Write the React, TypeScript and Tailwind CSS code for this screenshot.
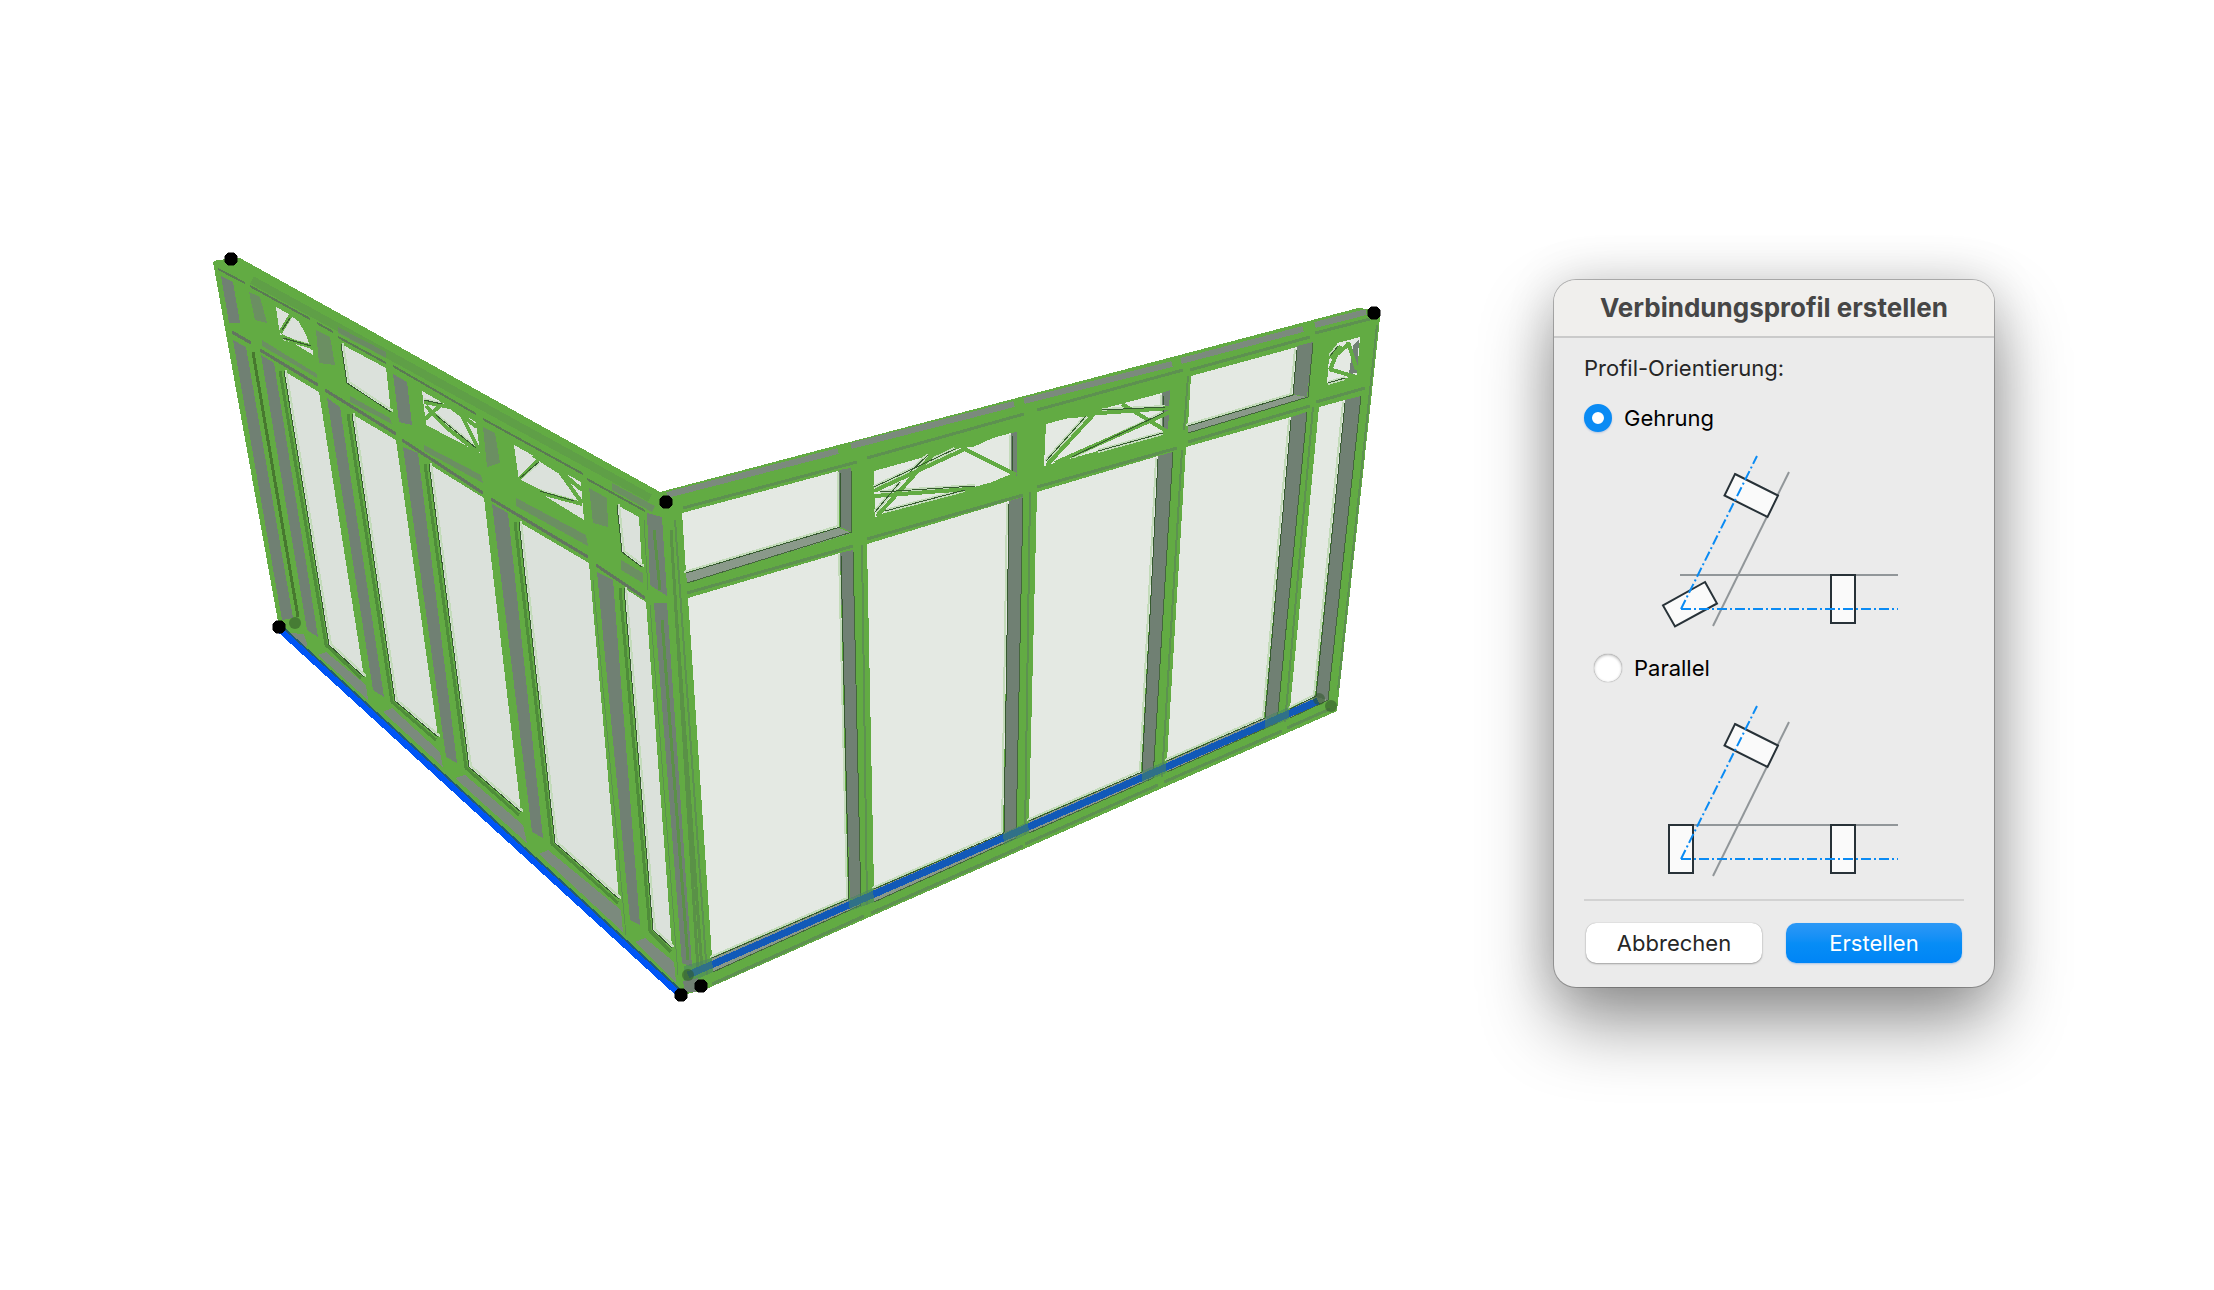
import { useState } from 'react';

const GREEN = '#62ab43';
const DEEP = '#4f8c3a';
const SHADE = '#5d9150';
const DARK = '#365a30';
const PALE = '#c3dbba';
const STEEL = '#708073';

type Quad = string;

const leftPanes: Quad[] = [
  '284,371 319,392 364,677 329,645',
  '352,414 396,440 438,737 395,701',
  '429,464 484,498 521,812 469,767',
  '519,522 589,563 619,899 555,843',
  '624,588 646,602 672,948 653,930',
  '276,307 313,327 313,355 280,335',
  '341,344 386,368 391,412 347,383',
  '422,391 476,422 480,453 426,425',
  '514,445 581,482 584,520 519,480',
  '617,505 639,517 642,567 622,552',
];

const leftPaneEdges: Quad[] = [
  '284,371 329,645 364,677',
  '352,414 395,701 438,737',
  '429,464 469,767 521,812',
  '519,522 555,843 619,899',
  '624,588 653,930 672,948',
  '341,344 347,383 391,412',
  '617,505 622,552 642,567',
];

const leftShadeLines: Quad[] = [
  '280,371 326,645 361,678',
  '348,414 392,702 436,740',
  '425,464 466,768 519,815',
  '515,522 552,844 618,903',
  '620,588 650,931 671,952',
];

const leftSteel: Quad[] = [
  '221,276 233,282 240,323 229,323',
  '233,340 246,347 293,618 282,620',
  '261,355 274,363 318,637 307,630',
  '327,398 340,407 384,697 373,690',
  '403,447 418,453 457,763 446,757',
  '492,504 508,513 543,838 532,832',
  '597,572 613,580 640,925 630,920',
  '393,374 407,382 412,425 399,422',
  '647,513 662,517 667,596 650,585',
  '654,603 667,603 692,967 682,963',
];

const leftSoftSteel: Quad[] = [
  '249,292 260,297 267,323 255,320',
  '316,330 330,337 335,365 319,363',
  '483,427 495,433 500,463 487,467',
  '589,488 607,498 608,527 593,523',
  '338,327 386,352 386,358 338,333',
  '262,340 317,374 317,378 262,346',
  '350,396 390,418 392,424 350,402',
  '424,445 481,475 483,483 424,451',
  '516,498 586,535 588,546 516,506',
  '612,483 655,506 652,512 612,490',
  '621,560 643,573 643,583 621,570',
];

const leftBottomRail: Quad[] = [
  '290,633 304,634 307,644 306,648',
  '318,655 326,652 366,685 368,700',
  '383,712 392,708 440,752 443,767',
  '455,778 465,775 523,825 527,843',
  '539,854 548,850 621,910 623,932',
  '635,942 645,938 674,962 676,982',
];

const rightPanes: Quad[] = [
  '682,513 838,471 839,527 686,572',
  '688,598 840,553 848,898 712,957',
  '874,471 1011,433 1011,477 875,517',
  '867,544 1009,501 1003,833 874,888',
  '1046,424 1162,393 1163,433 1044,466',
  '1037,492 1158,456 1141,772 1029,820',
  '1191,376 1297,347 1293,394 1188,425',
  '1186,447 1291,417 1264,718 1167,760',
  '1330,345 1360,337 1357,375 1327,383',
  '1319,407 1345,400 1315,696 1290,708',
];

const rightSteel: Quad[] = [
  '839,470 851,468 852,532 840,527',
  '840,553 853,550 861,903 850,898',
  '1011,433 1017,432 1017,476 1011,475',
  '1009,501 1023,497 1016,838 1004,833',
  '1162,393 1170,390 1168,432 1162,432',
  '1158,456 1173,452 1153,777 1142,772',
  '1297,346 1313,342 1307,397 1293,394',
  '1291,417 1307,412 1277,723 1265,718',
  '1353,345 1359,340 1357,373 1349,374',
  '1345,400 1361,396 1328,700 1316,697',
];

const rightPaneEdges: Quad[] = [
  '840,473 840,527 686,573',
  '841,555 849,899 712,958',
  '1012,436 1012,475',
  '1009,504 1004,833 874,889',
  '1163,396 1163,430',
  '1158,459 1142,772 1029,821',
  '1297,350 1293,395 1188,426',
  '1291,420 1265,718 1167,761',
  '1345,403 1316,696 1290,709',
];

const rightFarEdges: Quad[] = [
  '851,470 852,532 687,583',
  '853,551 861,905 713,972',
  '1023,498 1016,838 874,902',
  '1173,452 1153,778 1029,833',
  '1313,343 1308,397 1188,433',
  '1307,412 1277,723 1167,772',
  '1361,396 1328,700 1290,718',
];

const sills: Quad[] = [
  '712,958 849,899 861,905 713,972',
  '874,889 1004,833 1016,838 874,902',
  '1029,821 1142,772 1153,778 1029,833',
  '1167,761 1265,718 1277,723 1167,772',
  '1290,709 1316,697 1328,700 1290,718',
  '686,573 839,528 852,533 687,583',
  '1188,426 1293,395 1308,397 1188,433',
];

const topChannels: Quad[] = [
  '667,495 838,451',
  '851,446 1014,404',
  '1024,401 1172,364',
  '1181,361 1303,329',
  '1315,325 1366,312',
];

const rightShades: Quad[] = [
  '683,508 857,462',
  '867,458 1024,414',
  '1037,410 1183,370',
  '1190,370 1310,337',
  '1315,333 1370,319',
  '687,593 853,546',
  '867,539 1023,495',
  '1037,487 1177,448',
  '1188,442 1310,406',
  '1316,402 1365,388',
  '712,984 864,916',
  '871,913 1023,846',
  '1025,844 1158,785',
  '1164,782 1282,731',
  '1287,728 1330,709',
];

const rightPostShades: Quad[] = [
  '862,545 867,905',
  '1030,492 1025,835',
  '1182,450 1162,777',
  '1188,376 1184,430',
  '1313,407 1285,722',
  '1377,325 1338,690',
  '675,520 707,975',
];

const trussMembers: Quad[] = [
  '280,333 292,313',
  '289,312 300,320 308,334 313,350',
  '281,336 295,342 313,347',
  '424,402 455,408 462,416 480,452',
  '424,420 443,403',
  '426,406 447,428 478,452',
  '452,408 477,427',
  '518,480 539,459',
  '533,455 560,472 582,503',
  '519,481 545,494 582,504',
  '562,473 582,490',
  '874,491 965,449',
  '874,496 983,488 1014,475',
  '877,516 935,452',
  '965,449 1016,475',
  '1047,465 1094,414',
  '1070,416 1100,413 1170,408',
  '1055,463 1170,412',
  '1122,404 1168,432',
  '1330,370 1336,355 1350,343',
  '1329,369 1356,377',
  '1348,342 1357,370',
  '1330,358 1341,346',
];

const trussShadows: Quad[] = [
  '282,330 290,318',
  '283,338 311,346',
  '424,400 442,404',
  '436,415 476,448',
  '520,478 539,462',
  '540,491 574,501',
  '874,487 955,449',
  '880,492 975,486',
  '875,512 900,482',
  '910,472 928,455',
  '885,511 965,490',
  '1046,461 1086,416',
  '1102,410 1165,407',
  '1072,457 1163,413',
  '1098,451 1163,433',
  '1330,356 1338,346',
  '1328,383 1345,378',
];

const anchors = [
  [231, 259],
  [666, 502],
  [1374, 313],
  [279, 627],
  [681, 995],
  [701, 986],
];

const ghostAnchors = [
  [295, 623],
  [688, 975],
  [1319, 699],
  [1331, 706],
];

const polygons = (items: Quad[], fill: string, opacity = 1) =>
  items.map((points) => <polygon key={points} points={points} fill={fill} opacity={opacity} />);

const lines = (items: Quad[], stroke: string, width: number) =>
  items.map((points) => (
    <polyline key={points} points={points} fill="none" stroke={stroke} strokeWidth={width} />
  ));

function FacadeModel() {
  return (
    <svg
      viewBox="200 240 1200 770"
      className="mt-60 min-w-0 flex-1"
      shapeRendering="crispEdges"
      role="img"
      aria-label="Fassade"
    >
      <polygon
        points="213,262 217,260 240,258 660,492 1358,308 1378,310 1380,318 1337,711 704,990 683,995 279,627"
        fill={GREEN}
      />

      {/* left wing */}
      {lines(['252,280 650,498'], '#5f9f47', 8)}
      {polygons(leftSteel, STEEL)}
      {polygons(leftSoftSteel, STEEL, 0.65)}
      {polygons(leftBottomRail, '#7b8a7d')}
      {lines(['253,352 298,617'], '#47782f', 3)}
      {lines(leftShadeLines, DEEP, 3)}
      {polygons(leftPanes, '#dbe1db')}
      <g transform="translate(2 -1)">{lines(leftPaneEdges, PALE, 2)}</g>
      {lines(leftPaneEdges, DARK, 1)}
      {lines(
        ['218,269 245,283', '250,286 310,319', '317,323 333,332', '338,337 386,363', '393,366 476,414', '483,419 583,474', '587,479 645,511'],
        '#5a7a53',
        2,
      )}
      {lines(
        ['232,332 251,343', '260,350 318,385', '325,390 396,434', '402,440 483,493', '491,499 588,557', '596,565 645,598'],
        '#62755f',
        3,
      )}
      {lines(['593,580 626,935', '644,520 648,590', '650,605 678,975'], SHADE, 1)}
      {lines(['654,530 660,590', '662,620 688,960', '671,530 698,970', '676,610 702,970'], '#5a9147', 3)}

      {/* right wing */}
      {polygons(rightPanes, '#e4e9e3')}
      <g transform="translate(-2 -1)">{lines(rightPaneEdges, PALE, 2)}</g>
      {polygons(rightSteel, STEEL)}
      {polygons(sills, '#8a998a')}
      {lines(rightPaneEdges, DARK, 1)}
      {lines(rightFarEdges, '#44663c', 1)}
      {lines(topChannels, '#7b8a7d', 6)}
      {lines(rightShades, SHADE, 3)}
      {lines(rightPostShades, SHADE, 2)}

      {/* arched heads and bracing */}
      {polygons(
        [
          '960,448 973,447 993,438 1011,433 1011,430 935,452 930,460',
          '1062,419 1094,416 1106,408 1128,402 1128,398 1062,416',
          '884,513 963,490 1011,477 1011,484 875,518',
          '1096,453 1163,433 1163,438 1044,468 1060,463',
          '300,318 313,327 313,345 307,333',
          '1326,343 1340,340 1331,352 1326,375',
        ],
        GREEN,
      )}
      {lines(trussShadows, PALE, 4)}
      {lines(trussMembers, GREEN, 4)}
      {lines(trussShadows, DARK, 1)}

      {/* base lines */}
      <line x1="688" y1="975" x2="1318" y2="701" stroke="#1159b8" strokeWidth="7" />
      {polygons(
        [
          '684,966 712,958 713,972 684,985',
          '848,899 873,888 874,902 850,911',
          '1003,833 1028,822 1029,833 1004,845',
          '1142,771 1166,761 1166,773 1142,783',
          '1265,717 1289,707 1289,719 1265,729',
        ],
        '#4b8560',
        0.55,
      )}
      <line x1="282" y1="628" x2="681" y2="992" stroke="#245d70" strokeWidth="4" />
      <line x1="279" y1="629" x2="681" y2="996" stroke="#0055f5" strokeWidth="6" />
      <polygon points="683,981 698,978 696,992 685,992" fill={STEEL} />

      <g shapeRendering="auto">
        {ghostAnchors.map(([x, y]) => (
          <circle key={x} cx={x} cy={y} r="6" fill="#2f5528" opacity="0.55" />
        ))}
        {anchors.map(([x, y]) => (
          <polygon
            key={`${x}-${y}`}
            points="-3,-6 3,-6 6,-3 6,3 3,6 -3,6 -6,3 -6,-3"
            transform={`translate(${x} ${y})`}
            fill="#000"
            stroke="#000"
            strokeLinejoin="round"
          />
        ))}
      </g>
    </svg>
  );
}

function ProfileDiagram({ corner }: { corner: string }) {
  return (
    <svg viewBox="1658 452 244 180" className="ml-[74px] w-[244px]" aria-hidden="true">
      <g fill="none" stroke="#919699" strokeWidth="2">
        <path d="M1680 575H1898" />
        <path d="M1789 472L1713 626" />
      </g>
      <g fill="#fafafa" stroke="#283238" strokeWidth="2">
        <polygon points="1735,474 1778,495.500 1767.500,517 1724.500,495.500" />
        <polygon points={corner} />
        <polygon points="1831,575 1855,575 1855,623 1831,623" />
      </g>
      <g fill="none" stroke="#0a8bf4" strokeWidth="2" strokeDasharray="10 3 2 3">
        <path d="M1681 609L1757 456" />
        <path d="M1681 609H1898" />
      </g>
    </svg>
  );
}

const options = [
  {
    id: 'gehrung',
    label: 'Gehrung',
    indent: '',
    corner: '1705,582 1717,603.500 1675,626.500 1663,605.500',
  },
  {
    id: 'parallel',
    label: 'Parallel',
    indent: 'pl-[10px]',
    corner: '1669,575 1693,575 1693,623 1669,623',
  },
];

function ProfileDialog() {
  const [orientation, setOrientation] = useState('gehrung');

  return (
    <form
      role="dialog"
      aria-labelledby="dialog-title"
      onSubmit={(event) => event.preventDefault()}
      className="mt-[280px] w-[440px] shrink-0 overflow-hidden rounded-[22px] bg-[#ebebeb] shadow-[0_0_0_1px_rgba(0,0,0,0.25),0_36px_72px_rgba(0,0,0,0.42),0_0_50px_rgba(0,0,0,0.14)]"
    >
      <header className="flex h-[58px] items-center justify-center border-b-2 border-[#cacaca] bg-[#f0efed]">
        <h1 id="dialog-title" className="text-[26px] leading-8 font-bold text-[#464646]">
          Verbindungsprofil erstellen
        </h1>
      </header>

      <div className="px-[30px] pt-[14px] pb-6">
        <p id="orientation-label" className="text-[22px] leading-8 text-[#262626]">
          Profil-Orientierung:
        </p>

        <div role="radiogroup" aria-labelledby="orientation-label" className="mt-[18px]">
          {options.map(({ id, label, indent, corner }) => (
            <div key={id} className={id === 'gehrung' ? 'h-[250px]' : 'h-[247px]'}>
              <label className={`flex h-8 items-center gap-3 text-[22px] text-black ${indent}`}>
                <input
                  type="radio"
                  name="orientation"
                  value={id}
                  checked={orientation === id}
                  onChange={() => setOrientation(id)}
                  className="size-7 appearance-none rounded-full bg-white shadow-[inset_0_1px_3px_rgba(0,0,0,0.3),0_0_1px_rgba(0,0,0,0.5)] checked:border-8 checked:border-[#0a8bf4] checked:shadow-[0_1px_2px_rgba(0,80,200,0.25)]"
                />
                {label}
              </label>
              <div className="pt-[18px]">
                <ProfileDiagram corner={corner} />
              </div>
            </div>
          ))}
        </div>

        <hr className="border-t-2 border-[#d2d2d2]" />

        <div className="mt-[22px] flex gap-6 px-[2px] text-[22px]">
          <button
            type="button"
            className="h-10 flex-1 rounded-[10px] bg-white text-[#262626] shadow-[0_1px_2px_rgba(0,0,0,0.3),0_0_1px_rgba(0,0,0,0.3)]"
          >
            Abbrechen
          </button>
          <button
            type="submit"
            className="h-10 flex-1 rounded-[10px] bg-linear-to-b from-[#2b98f6] via-[#078df6] to-[#0085f6] text-white shadow-[0_1px_2px_rgba(0,100,220,0.3)]"
          >
            Erstellen
          </button>
        </div>
      </div>
    </form>
  );
}

export default function App() {
  return (
    <main className="flex min-h-screen items-start gap-[154px] bg-white pr-[220px] pl-[200px] font-[Inter,sans-serif]">
      <FacadeModel />
      <ProfileDialog />
    </main>
  );
}
